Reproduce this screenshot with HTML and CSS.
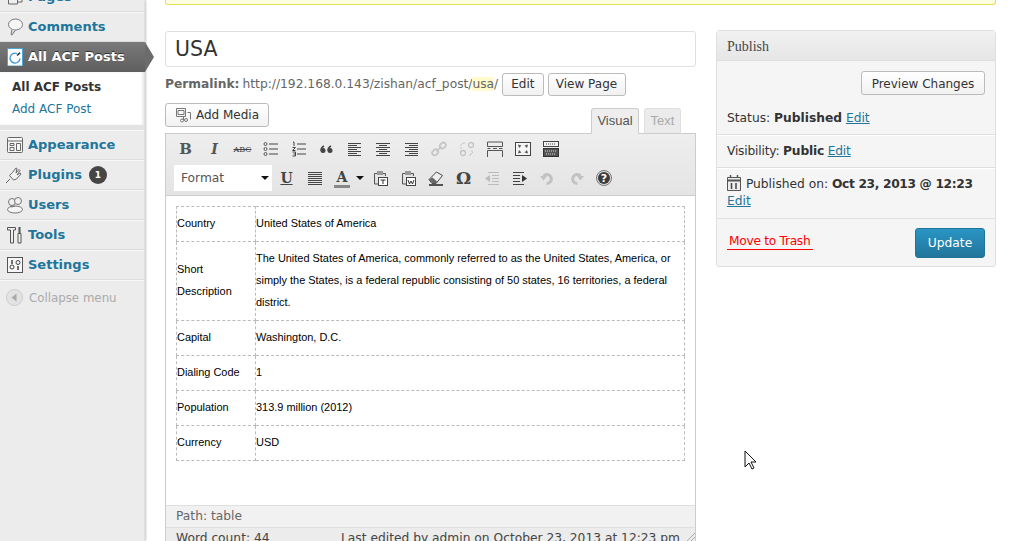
FILE: index.html
```html
<!DOCTYPE html>
<html lang="en">
<head>
<meta charset="utf-8">
<title>Edit ACF Post</title>
<link rel="stylesheet" href="styles.css">
</head>
<body>
<div class="page">
  <nav class="sidebar">
    <ul class="menu">
      <li class="item"><svg class="mi" viewBox="0 0 16 18"><path d="M1.500 3h9v13h-9zM5 1h10v13h-4" fill="#eee" stroke="#666"/></svg><span>Pages</span></li>
      <li class="item"><svg class="mi" viewBox="0 0 16 18"><ellipse cx="8.500" cy="6.500" rx="7" ry="5.500" fill="#f6f6f6" stroke="#777"/><path d="M5 11.500l-1 5 1 .5 3.500-5" fill="#ddd" stroke="#777"/></svg><span>Comments</span></li>
      <li class="item active"><svg class="mi" viewBox="0 0 16 18"><rect x=".5" y=".5" width="15" height="17.500" fill="#fff" stroke="#4aa5dd"/><path d="M10 5.500a5 5 0 1 0 3 5" fill="none" stroke="#3a97d3" stroke-width="1.300"/><path d="M9.500 7l3-3 1 1.500-3 2.500z" fill="#333"/></svg><span>All ACF Posts</span></li>
      <li class="submenu">
        <a class="sub current">All ACF Posts</a>
        <a class="sub">Add ACF Post</a>
      </li>
      <li class="item"><svg class="mi" viewBox="0 0 16 18"><rect x=".5" y="1.500" width="15" height="15" rx="1" fill="#f6f6f6" stroke="#666"/><path d="M1 5h14M3 7.500h4v2H3zM3 11.500h4v3H3zM9.500 7.500h4v7h-4z" fill="none" stroke="#666"/></svg><span>Appearance</span></li>
      <li class="item"><svg class="mi plug" viewBox="0 0 16 18"><path d="M0 17l4-4M3.500 9.500l4 4.500 3-1 4.500-5-1-1-3 2 3-4.500-1-1-3 3.500 1-4.500-1-.5-3.500 4.500z" fill="#f2f2f2" stroke="#666"/></svg><span>Plugins</span><b class="badge">1</b></li>
      <li class="item"><svg class="mi" viewBox="0 0 16 18"><circle cx="5" cy="6" r="3.500" fill="#f0f0f0" stroke="#777"/><circle cx="11" cy="5" r="3.500" fill="#f0f0f0" stroke="#777"/><ellipse cx="8" cy="13.500" rx="7.500" ry="3.500" fill="#f6f6f6" stroke="#777"/><path d="M3 10l2 1 3-1" fill="none" stroke="#777"/></svg><span>Users</span></li>
      <li class="item"><svg class="mi" viewBox="0 0 16 18"><path d="M.5 1.500h8v2.500H6.500v13h-3V4H.5zM11 7.500h3V17h-3z" fill="#eee" stroke="#555"/><path d="M12.500 1v6.500" stroke="#555" stroke-width="2"/></svg><span>Tools</span></li>
      <li class="item"><svg class="mi" viewBox="0 0 16 18"><rect x=".5" y="1.500" width="15" height="15" fill="#f6f6f6" stroke="#555"/><path d="M5 4v4M11 10v4" stroke="#444" stroke-width="1.500"/><circle cx="5" cy="11" r="2" fill="none" stroke="#444"/><circle cx="11" cy="6.500" r="2" fill="none" stroke="#444"/></svg><span>Settings</span></li>
      <li class="collapse"><svg class="ci" viewBox="0 0 17 17"><circle cx="8.500" cy="8.500" r="8" fill="#e2e2e2" stroke="#ccc"/><path d="M10.500 4.500v8l-5-4z" fill="#aaa"/></svg><span>Collapse menu</span></li>
    </ul>
  </nav>

  <main class="content">
    <div class="notice"></div>
    <div class="columns">
      <section class="left">
        <div class="title">USA</div>
        <div class="permalink">
          <strong>Permalink:</strong>
          <span class="url">http://192.168.0.143/zishan/acf_post/<mark>usa</mark>/</span>
          <a class="btn small">Edit</a>
          <a class="btn small view">View Page</a>
        </div>
        <div class="editor-head">
          <a class="btn media">
            <svg class="media-icon" viewBox="0 0 16 16"><path d="M1.500 1.500h9v8h-9zM3 3.500h6v4H3z" fill="none" stroke="#777"/><circle cx="11" cy="13" r="1.500" fill="none" stroke="#777"/><circle cx="7" cy="13.500" r="1.500" fill="none" stroke="#777"/><path d="M12.500 5.500h3v7M8.500 10v3" fill="none" stroke="#777"/></svg>
            Add Media</a>
          <div class="tabs"><span class="tab on">Visual</span><span class="tab off">Text</span></div>
        </div>
        <div class="editor">
          <div class="toolbar">
            <div class="tb-row">
              <span class="tb serif-b">B</span>
              <span class="tb serif-i">I</span>
              <span class="tb abc">ABC</span>
              <span class="tb"><svg viewBox="0 0 16 16"><g fill="none" stroke="#555"><circle cx="2.500" cy="3" r="1.500"/><circle cx="2.500" cy="8" r="1.500"/><circle cx="2.500" cy="13" r="1.500"/></g><path d="M6 3h9M6 8h9M6 13h9" stroke="#444"/></svg></span>
              <span class="tb"><svg viewBox="0 0 16 16"><path d="M2 1h1v4M1.500 6.500h3l-3 3h3M1.500 11h3v4h-3M2.500 13h2M6 3h9M6 8h9M6 13h9" fill="none" stroke="#444"/></svg></span>
              <span class="tb"><svg viewBox="0 0 16 16"><g fill="#444"><circle cx="4" cy="9.500" r="2.500"/><circle cx="11" cy="9.500" r="2.500"/></g><path d="M2 9.500c0-2 1-3.500 3-4.500M9 9.500c0-2 1-3.500 3-4.500" fill="none" stroke="#444" stroke-width="1.500"/></svg></span>
              <span class="tb"><svg viewBox="0 0 16 16"><path d="M1 2.500h13M1 4.500h9M1 6.500h13M1 8.500h9M1 10.500h13M1 12.500h9M1 14.500h13" stroke="#444"/></svg></span>
              <span class="tb"><svg viewBox="0 0 16 16"><path d="M1 2.500h14M4 4.500h8M1 6.500h14M4 8.500h8M1 10.500h14M4 12.500h8M1 14.500h14" stroke="#444"/></svg></span>
              <span class="tb"><svg viewBox="0 0 16 16"><path d="M2 2.500h13M6 4.500h9M2 6.500h13M6 8.500h9M2 10.500h13M6 12.500h9M2 14.500h13" stroke="#444"/></svg></span>
              <span class="tb"><svg viewBox="0 0 16 16"><g fill="none" stroke="#c4c4c4" stroke-width="1.700"><rect x="1" y="9" width="6.500" height="5" rx="2.500" transform="rotate(-45 4 11.500)"/><rect x="8.500" y="2" width="6.500" height="5" rx="2.500" transform="rotate(-45 12 4.500)"/></g><path d="M5.500 10.500l5-5" stroke="#c4c4c4" stroke-width="1.500"/></svg></span>
              <span class="tb"><svg viewBox="0 0 16 16"><g fill="none" stroke="#c4c4c4" stroke-width="1.300"><circle cx="4" cy="12" r="2.500"/><circle cx="12" cy="4" r="2.500"/></g><path d="M1 5l3-3M11 14l3-3M5 1v2M1 7h2M14 10h-2M11 15v-2" stroke="#c4c4c4"/></svg></span>
              <span class="tb"><svg viewBox="0 0 16 16"><path d="M.5 1V5.500h15V1zM.5 7.500h3M6 7.500h4M12 7.500h3.500M.5 16V9.500h15V16" fill="none" stroke="#555"/></svg></span>
              <span class="tb"><svg viewBox="0 0 16 16"><rect x=".5" y="1.500" width="15" height="13" fill="#f6f6f6" stroke="#444"/><path d="M3 3.500l3.500 1-2.500 2.500zM13 3.500l-3.500 1 2.500 2.500zM3 12.500l3.500-1-2.500-2.500zM13 12.500l-3.500-1 2.500-2.500z" fill="#555"/></svg></span>
              <span class="tb"><svg viewBox="0 0 16 16"><rect x=".5" y=".5" width="15" height="5" fill="#f2f2f2" stroke="#444"/><rect x=".5" y="7.500" width="15" height="8" fill="#555" stroke="#333"/><path d="M3 3h10" stroke="#444" stroke-dasharray="1 1"/><path d="M2 10h12M3 13h10" stroke="#ddd" stroke-dasharray="1 1"/></svg></span>
            </div>
            <div class="tb-row second">
              <div class="format"><span>Format</span><i class="caret"></i></div>
              <span class="tb underline">U</span>
              <span class="tb"><svg viewBox="0 0 16 16"><path d="M1 2.500h14M1 4.500h14M1 6.500h14M1 8.500h14M1 10.500h14M1 12.500h14M1 14.500h14" stroke="#444"/></svg></span>
              <span class="tb color">A</span><i class="caret sm"></i>
              <span class="tb"><svg viewBox="0 0 16 16"><path d="M2.500 3.500h11V6M2.500 3.500V14H6" fill="#ddd" stroke="#555"/><rect x="5" y="1" width="6" height="4" fill="#999"/><rect x="6.500" y="7.500" width="9" height="8" fill="#fff" stroke="#444"/><path d="M8.500 10h5M11 10v4" stroke="#333"/></svg></span>
              <span class="tb"><svg viewBox="0 0 16 16"><path d="M2.500 3.500h11V6M2.500 3.500V14H6" fill="#ddd" stroke="#555"/><rect x="5" y="1" width="6" height="4" fill="#999"/><rect x="6.500" y="7.500" width="9" height="8" fill="#fff" stroke="#444"/><path d="M8 10l1.500 4 1.500-3 1.500 3 1.500-4" fill="none" stroke="#333"/></svg></span>
              <span class="tb"><svg viewBox="0 0 16 16"><path d="M1 9.500L8.500 2l6 3.500-6.500 8H4z" fill="#eee" stroke="#444"/><path d="M1 9.500l4 4h3l1.500-1.500-5-4.500z" fill="#666"/><path d="M1 15h14" stroke="#222" stroke-width="1.500"/></svg></span>
              <span class="tb omega">Ω</span>
              <span class="tb"><svg viewBox="0 0 16 16"><path d="M4 2.500h11M8 5.500h7M8 8.500h7M8 11.500h7M4 14.500h11" stroke="#bbb"/><path d="M1 8.500l5-3.500v7z" fill="#bbb"/></svg></span>
              <span class="tb"><svg viewBox="0 0 16 16"><path d="M1 2.500h11M1 5.500h7M1 8.500h7M1 11.500h7M1 14.500h11" stroke="#444"/><path d="M15 8.500l-5-3.500v7z" fill="#333"/></svg></span>
              <span class="tb"><svg viewBox="0 0 16 16"><path d="M3.500 6a4.500 4.500 0 1 1 3 7.500" fill="none" stroke="#c2c2c2" stroke-width="3"/><path d="M0 6h7l-3.500 4.500z" fill="#c2c2c2"/></svg></span>
              <span class="tb"><svg viewBox="0 0 16 16"><path d="M12.500 6a4.500 4.500 0 1 0-3 7.500" fill="none" stroke="#c2c2c2" stroke-width="3"/><path d="M16 6H9l3.500 4.500z" fill="#c2c2c2"/></svg></span>
              <span class="tb"><svg viewBox="0 0 16 16"><circle cx="8" cy="8" r="7.500" fill="#ddd" stroke="#777"/><circle cx="8" cy="8" r="6" fill="#3c3c3c"/><text x="8" y="12" text-anchor="middle" class="help">?</text></svg></span>
            </div>
          </div>
          <div class="body">
            <table class="data">
              <tr><td class="k">Country</td><td>United States of America</td></tr>
              <tr><td class="k">Short Description</td><td>The United States of America, commonly referred to as the United States, America, or simply the States, is a federal republic consisting of 50 states, 16 territories, a federal district.</td></tr>
              <tr><td class="k">Capital</td><td>Washington, D.C.</td></tr>
              <tr><td class="k">Dialing Code</td><td>1</td></tr>
              <tr><td class="k">Population</td><td>313.9 million (2012)</td></tr>
              <tr><td class="k">Currency</td><td>USD</td></tr>
            </table>
          </div>
          <div class="path">Path: table</div>
          <div class="status"><span>Word count: 44</span><span>Last edited by admin on October 23, 2013 at 12:23 pm</span><svg class="grip" viewBox="0 0 8 8"><path d="M0 8l8-8M4 8l4-4" stroke="#aaa"/></svg></div>
        </div>
      </section>

      <aside class="publish">
        <h3>Publish</h3>
        <div class="preview"><a class="btn prev">Preview Changes</a></div>
        <div class="row first">Status: <strong>Published</strong> <a class="lnk">Edit</a></div>
        <div class="row vis">Visibility: <strong>Public</strong> <a class="lnk">Edit</a></div>
        <div class="row date">
          <svg class="cal" viewBox="0 0 14 16"><path d="M.5 2.500h13v13H.5z" fill="#eee" stroke="#555"/><path d="M1 5.500h12" stroke="#555" stroke-width="2"/><path d="M3.500 0v3M10.500 0v3" stroke="#555" stroke-width="1.500"/><path d="M4.500 8v6M9 8v6" stroke="#444" stroke-width="1.500"/></svg>
          Published on: <strong>Oct 23, 2013 @ 12:23</strong> <a class="lnk">Edit</a>
        </div>
        <div class="actions"><a class="trash">Move to Trash</a><a class="update">Update</a></div>
      </aside>
    </div>
  </main>
</div>
<svg class="cursor" viewBox="0 0 13 21"><path d="M1 1v16l4-4 3 6 2-1-3-6h5z" fill="#fff" stroke="#111"/></svg>
</body>
</html>
```

FILE: styles.css
```css
* { box-sizing: border-box; }
html, body { margin: 0; height: 541px; overflow: hidden; background: #fff; }
body { font: 12.25px/18px "DejaVu Sans", sans-serif; color: #333; }
a { color: inherit; text-decoration: none; }
ul { list-style: none; margin: 0; padding: 0; }

.page { display: flex; height: 541px; }

.sidebar { width: 145px; flex: none; background: #ececec; box-shadow: 1px 0 2px rgba(0,0,0,.22); border-right: 1px solid #e0e0e0; height: 541px; }
.menu { margin-top: -18px; }
.item { height: 30px; display: flex; align-items: center; padding-left: 7px; gap: 5px; font-size: 13px; font-weight: bold; color: #21759b; border-top: 1px solid #f8f8f8; border-bottom: 1px solid #dcdcdc; }
.mi { width: 16px; height: 18px; flex: none; }
.mi.plug { margin-left: -1px; margin-right: 1px; }
.item.active { position: relative; width: 145px; background: linear-gradient(#7a7a7a, #5e5e5e); color: #fff; border: 0; text-shadow: 0 -1px 0 #333; }
.item.active::after { content: ""; position: absolute; left: 145px; top: 0; border-left: 9px solid #6c6c6c; border-top: 15px solid transparent; border-bottom: 15px solid transparent; }
.submenu { background: #fff; padding: 4px 0 0 12px; display: flex; flex-direction: column; border-bottom: 5px solid #e3e3e3; height: 58px; box-shadow: inset -2px 0 2px rgba(0,0,0,.08); }
.sub { line-height: 22px; color: #21759b; font-size: 12px; }
.sub.current { color: #333; font-weight: bold; }
.badge { width: 18px; height: 18px; border-radius: 50%; background: #464646; color: #fff; font-size: 9px; line-height: 18px; text-align: center; margin-left: 2px; }
.collapse { display: flex; align-items: center; gap: 6px; padding: 0 0 0 6px; height: 34px; color: #aaa; font-size: 11.800px; border-top: 1px solid #f8f8f8; }
.ci { width: 17px; height: 17px; }

.content { flex: 1; padding: 0 15px 0 20px; min-width: 0; }
.notice { height: 5px; background: #ffffe0; border: 1px solid #e6db55; border-top: 0; border-radius: 0 0 3px 3px; }
.columns { display: flex; gap: 20px; margin-top: 25px; }
.left { width: 531px; flex: none; padding-top: 1px; }

.title { height: 36px; border: 1px solid #dfdfdf; border-radius: 3px; padding: 0 9px; font-size: 20.500px; line-height: 34px; color: #333; }
.permalink { display: flex; align-items: center; margin-top: 6px; height: 22px; color: #666; }
.permalink strong { margin-right: 3px; }
.url { margin-right: 4px; }
mark { background: #fffbcc; color: inherit; }
.btn { display: inline-flex; align-items: center; justify-content: center; border: 1px solid #bbb; border-radius: 3px; background: linear-gradient(#fff, #f1f1f1); color: #333; font-size: 12px; }
.btn.small { height: 23px; padding: 0 8px; margin-right: 4px; }
.btn.small.view { width: 78px; padding: 0; }
.editor-head { display: flex; justify-content: space-between; align-items: flex-end; height: 30px; margin-top: 8px; }
.media { width: 104px; height: 24px; margin-bottom: 6px; gap: 5px; }
.media-icon { width: 16px; height: 16px; }
.tabs { display: flex; gap: 5px; margin-right: 15px; margin-bottom: -1px; position: relative; z-index: 1; }
.tab { height: 26px; text-align: center; font: 13px/24px "Liberation Sans", sans-serif; border: 1px solid #dfdfdf; border-radius: 3px 3px 0 0; }
.tab.off { width: 37px; color: #aaa; background: #ebebeb; border-bottom-color: #ccc; }
.tab.on { width: 48px; color: #555; background: #eee; border-color: #ccc #ccc #eee; }

.editor { border: 1px solid #ccc; border-bottom: 0; height: 409px; overflow: hidden; display: flex; flex-direction: column; }
.toolbar { height: 62px; flex: none; background: linear-gradient(#eee, #e4e4e4); border-bottom: 1px solid #ccc; padding: 1px 0 0 10px; }
.tb-row { display: flex; align-items: center; height: 28px; gap: 7px; }
.tb-row.second { margin-top: 1px; margin-left: -2px; }
.tb { width: 21px; height: 20px; display: flex; align-items: center; justify-content: center; flex: none; color: #444; }
.tb svg { width: 16px; height: 16px; }
.serif-b { font: bold 15px "DejaVu Serif", serif; color: #555; margin-left: -1px; margin-right: 1px; }
.serif-i { font: italic bold 14px "DejaVu Serif", serif; color: #555; }
.abc { font: 8px "DejaVu Serif", serif; text-decoration: line-through; }
.omega { font: bold 17px "DejaVu Serif", serif; }
.underline { font: bold 14px "DejaVu Serif", serif; text-decoration: underline; }
.color { font: bold 14px/14px "DejaVu Serif", serif; border-bottom: 3px solid #888; width: 16px; height: 19px; margin: 0 0 0 2px; }
.format { width: 98px; height: 26px; background: #fff; display: flex; align-items: center; justify-content: space-between; padding: 0 3px 0 7px; font-size: 12.250px; color: #555; margin-right: -3px; }
.caret { border-top: 4px solid #111; border-left: 4px solid transparent; border-right: 4px solid transparent; width: 0; height: 0; flex: none; }
.caret.sm { margin-left: -1px; margin-right: -2px; }
.help { font: bold 11px "DejaVu Sans", sans-serif; fill: #fff; }

.body { height: 310px; flex: none; padding: 10px 10px 0; background: #fff; border-bottom: 1px solid #dfdfdf; }
.data { border-collapse: collapse; width: 509px; font: 10.950px/22px "Liberation Sans", sans-serif; color: #000; }
.data td { border: 1px dashed #bbb; padding: 5px 0 7px; vertical-align: middle; }
.data .k { width: 79px; }
.path { height: 22px; flex: none; background: #f1f1f1; border-bottom: 1px solid #dfdfdf; color: #666; line-height: 21px; padding-left: 10px; }
.status { position: relative; height: 20px; flex: none; display: flex; justify-content: space-between; background: #ececec; color: #444; padding: 0 15px 0 10px; line-height: 20px; }
.grip { position: absolute; right: 0; bottom: 7px; width: 8px; height: 8px; }

.publish { width: 280px; flex: none; height: 237px; background: #f5f5f5; border: 1px solid #dfdfdf; border-radius: 3px; }
.publish h3 { margin: 0; height: 30px; font: 400 14px/32px "Liberation Serif", serif; color: #464646; padding-left: 10px; background: linear-gradient(#f1f1f1, #e6e6e6); border-bottom: 1px solid #dfdfdf; }
.preview { display: flex; justify-content: flex-end; padding: 10px 10px 0; }
.prev { width: 124px; height: 24px; padding-top: 1px; }
.row { padding: 7px 10px 0; height: 33px; border-bottom: 1px solid #dfdfdf; border-top: 1px solid #fff; line-height: 16px; }
.row.first { height: 40px; border-top: 0; padding-top: 15px; }
.row.vis { letter-spacing: -.2px; }
.row.date { height: 51px; line-height: 17px; padding-top: 6px; }
.row.date strong { letter-spacing: -.35px; }
.lnk { color: #21759b; text-decoration: underline; }
.cal { width: 14px; height: 16px; vertical-align: -3px; margin-right: 1px; }
.actions { display: flex; justify-content: space-between; align-items: flex-start; padding: 9px 10px 0; }
.trash { color: #f00; border-bottom: 1px solid #f00; line-height: 15px; margin-top: 6px; padding: 0 2px; width: 86px; white-space: nowrap; letter-spacing: -.3px; }
.update { width: 70px; height: 30px; display: flex; align-items: center; justify-content: center; color: #fff; background: linear-gradient(#2a95c5, #21759b); border: 1px solid #21759b; border-radius: 3px; }
.cursor { position: absolute; left: 744px; top: 450px; width: 13px; height: 21px; }
```
